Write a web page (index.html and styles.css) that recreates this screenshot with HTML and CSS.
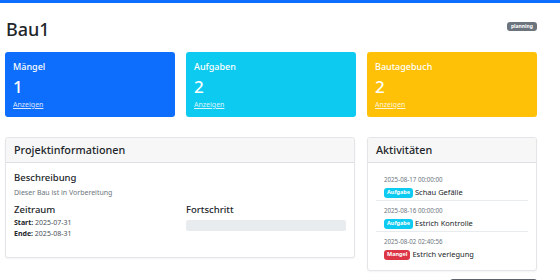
FILE: index.html
```html
<!DOCTYPE html>
<html lang="de">
<head>
<meta charset="utf-8">
<title>Bau1</title>
<link rel="stylesheet" href="styles.css">
</head>
<body>
<div class="topbar"></div>
<main class="container">
  <div class="title-row">
    <h1 class="title">Bau1</h1>
    <span class="badge badge-gray">planning</span>
  </div>

  <div class="stats">
    <div class="stat stat-blue">
      <div class="stat-label">Mängel</div>
      <div class="stat-value">1</div>
      <a class="stat-link" href="#">Anzeigen</a>
    </div>
    <div class="stat stat-cyan">
      <div class="stat-label">Aufgaben</div>
      <div class="stat-value">2</div>
      <a class="stat-link" href="#">Anzeigen</a>
    </div>
    <div class="stat stat-yellow">
      <div class="stat-label">Bautagebuch</div>
      <div class="stat-value">2</div>
      <a class="stat-link" href="#">Anzeigen</a>
    </div>
  </div>

  <div class="main-grid">
    <section class="card info-card">
      <div class="card-header">Projektinformationen</div>
      <div class="card-body">
        <h3 class="sub">Beschreibung</h3>
        <p class="muted">Dieser Bau ist in Vorbereitung</p>
        <div class="two-col">
          <div>
            <h3 class="sub">Zeitraum</h3>
            <p class="line"><strong>Start:</strong> 2025-07-31</p>
            <p class="line"><strong>Ende:</strong> 2025-08-31</p>
          </div>
          <div>
            <h3 class="sub">Fortschritt</h3>
            <div class="progress"></div>
          </div>
        </div>
      </div>
    </section>

    <div class="side">
      <section class="card act-card">
        <div class="card-header">Aktivitäten</div>
        <div class="card-body act-body">
          <ul class="act-list">
            <li class="act-item">
              <div class="act-date">2025-08-17 00:00:00</div>
              <div class="act-text"><span class="badge badge-cyan">Aufgabe</span> Schau Gefälle</div>
            </li>
            <li class="act-item">
              <div class="act-date">2025-08-16 00:00:00</div>
              <div class="act-text"><span class="badge badge-cyan">Aufgabe</span> Estrich Kontrolle</div>
            </li>
            <li class="act-item">
              <div class="act-date">2025-08-02 02:40:56</div>
              <div class="act-text"><span class="badge badge-red">Mangel</span> Estrich verlegung</div>
            </li>
          </ul>
        </div>
      </section>
      <div class="side-btn-row"><span class="side-btn"></span></div>
    </div>
  </div>
</main>
</body>
</html>
```

FILE: styles.css
```css
* { box-sizing: border-box; }
html, body { margin: 0; padding: 0; background: #fff; }
body {
  font-family: "Noto Sans", "Open Sans", sans-serif;
  color: #212529;
  overflow: hidden;
}
.topbar { height: 3px; background: #0d6efd; }
.container { width: 532px; margin-left: 5px; }

.title-row {
  display: flex;
  justify-content: space-between;
  align-items: center;
  height: 49px;
  padding: 2px 0 0 1px;
}
.title { margin: 0; font-size: 18px; font-weight: 500; line-height: 1; }

.badge {
  display: inline-block;
  color: #fff;
  font-weight: 700;
  border-radius: 3px;
  line-height: 1;
  white-space: nowrap;
  vertical-align: 1px;
}
.badge-gray { background: #6c757d; font-size: 5px; padding: 2px 4px; margin-top: -5px; }
.badge-cyan { background: #0dcaf0; font-size: 5.5px; padding: 2px 3px; }
.badge-red { background: #dc3545; font-size: 5.5px; padding: 2px 3px; }

.stats { display: grid; grid-template-columns: repeat(3, 1fr); gap: 11px; }
.stat {
  height: 65px;
  border-radius: 3px;
  color: #fff;
  padding: 9px 8px 0;
  display: flex;
  flex-direction: column;
}
.stat-blue { background: #0d6efd; }
.stat-cyan { background: #0dcaf0; }
.stat-yellow { background: #ffc107; }
.stat-label { font-size: 9px; font-weight: 500; line-height: 12px; }
.stat-value { font-size: 17px; font-weight: 500; line-height: 22px; margin-top: 3px; }
.stat-link { font-size: 7px; color: rgba(255,255,255,0.85); line-height: 9px; margin-top: 2px; }

.main-grid {
  display: grid;
  grid-template-columns: 350px 170px;
  gap: 12px;
  margin-top: 20px;
  align-items: start;
}
.card {
  border: 1px solid #e3e5e8;
  border-radius: 3px;
  box-shadow: 0 1px 2px rgba(0,0,0,0.05);
  background: #fff;
}
.card-header {
  height: 25px;
  background: #f7f7f7;
  border-bottom: 1px solid #dcdfe2;
  padding: 0 8px;
  font-size: 10.8px;
  font-weight: 500;
  line-height: 24px;
  border-radius: 3px 3px 0 0;
}
.card-body { padding: 8px 8px 14px; }
.info-card { height: 121px; }
.sub { margin: 0; font-size: 9.5px; font-weight: 500; line-height: 13px; }
.muted { margin: 4px 0 6px; font-size: 7px; color: #6c757d; line-height: 9px; }
.two-col { display: grid; grid-template-columns: 1fr 1fr; gap: 12px; }
.line { margin: 2px 0 0; font-size: 7px; color: #495057; line-height: 9px; }
.line strong { color: #212529; font-weight: 700; }
.progress { height: 11px; background: #e9ecef; border-radius: 2px; margin-top: 4px; }

.act-card { height: 134px; }
.act-body { padding: 7px 8px; }
.act-list { list-style: none; margin: 0; padding: 0; }
.act-item { padding: 6px 8px 5px; border-bottom: 1px solid #e9ecef; height: 31px; }
.act-item:last-child { border-bottom: 0; }
.act-date { font-size: 6.2px; color: #6c757d; line-height: 8px; }
.act-text { font-size: 7.5px; line-height: 11px; margin-top: 3px; }

.side-btn-row { display: flex; justify-content: flex-end; margin-top: 8px; }
.side-btn { width: 87px; height: 10px; background: #5c636a; border-radius: 3px; }
```
